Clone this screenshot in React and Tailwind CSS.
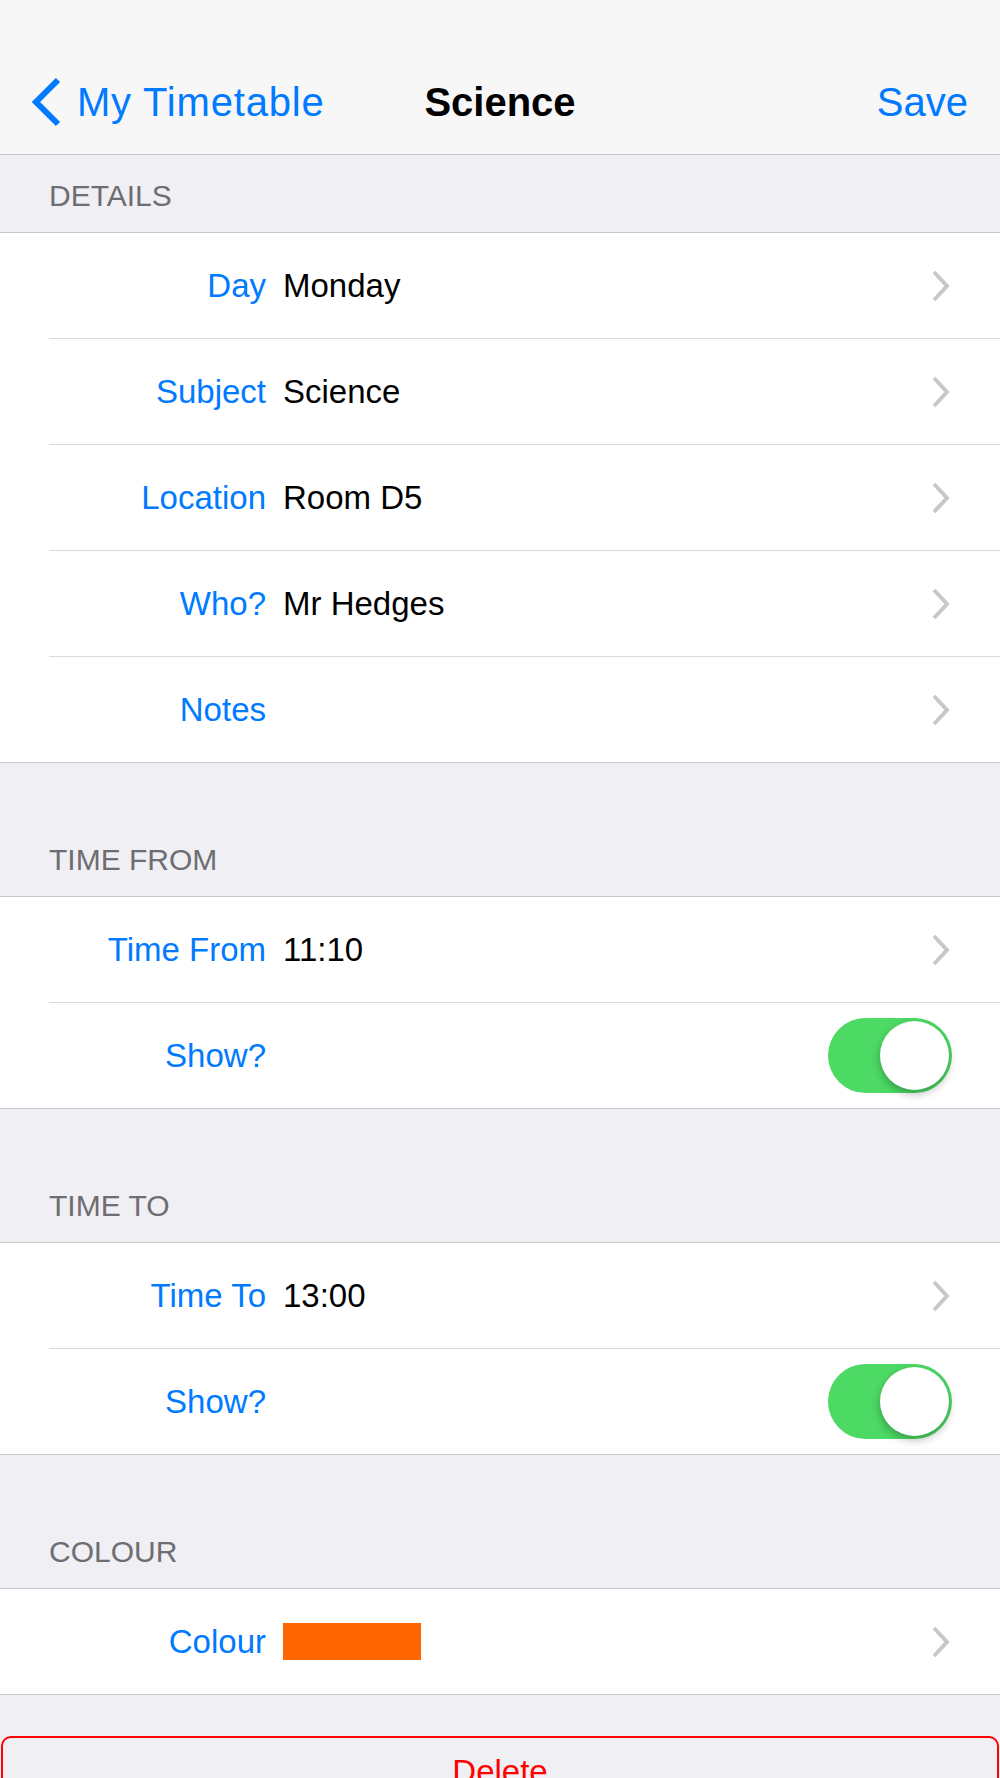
import React from 'react';

const font = { fontFamily: '"Liberation Sans", Arial, sans-serif' };

const Chevron = () => (
    <svg width="20" height="32" viewBox="0 0 20 32" className="shrink-0">
        <polyline points="3,2 16,16 3,30" fill="none" stroke="#c7c7cc" strokeWidth="4" />
    </svg>
);

const Toggle = () => (
    <div className="relative w-[124px] h-[75px] rounded-full bg-[#4cd964] shrink-0">
        <div className="absolute right-[3px] top-[3px] w-[69px] h-[69px] rounded-full bg-white shadow-[0_4px_9px_rgba(0,0,0,0.28)]" />
    </div>
);

const Header = ({ title, tall }) => (
    <div className={`${tall ? 'h-[133px]' : 'h-[77px]'} flex items-end pl-[49px] pb-[18px]`}>
        <span className="text-[30px] leading-[36px] text-[#6d6d72] uppercase">{title}</span>
    </div>
);

const Row = ({ label, value, swatch, toggle, last }) => (
    <div className={`ml-[49px] flex items-center ${last ? 'h-[105px]' : 'h-[106px] border-b border-[#d9d9dd]'}`}>
        <div className="w-[217px] text-right text-[33px] leading-[40px] text-[#007aff]">{label}</div>
        <div className="flex-1 ml-[17px] text-[33px] leading-[40px] text-black">
            {swatch ? <div className="w-[138px] h-[37px] bg-[#ff6600]" /> : value}
        </div>
        <div className={toggle ? 'pr-[48px]' : 'pr-[49px]'}>
            {toggle ? <Toggle /> : <Chevron />}
        </div>
    </div>
);

const Group = ({ children }) => (
    <div className="bg-white border-y border-[#c8c7cc]">{children}</div>
);

export default function App() {
    return (
        <div style={font} className="w-[1000px] h-[1778px] overflow-hidden bg-[#efeff4]">
            {/* navigation bar */}
            <div className="h-[155px] bg-[#f7f7f7] border-b border-[#c4c4c8] pt-[72px]">
                <div className="h-[60px] grid grid-cols-3 items-center">
                    <div className="flex items-center pl-[31px] gap-[16px] text-[40px] text-[#007aff] whitespace-nowrap">
                        <svg width="30" height="50" viewBox="0 0 30 50" className="shrink-0">
                            <polyline points="27,3 5,25 27,47" fill="none" stroke="#007aff" strokeWidth="6" />
                        </svg>
                        <span className="tracking-[0.8px]">My Timetable</span>
                    </div>
                    <div className="text-center text-[40px] font-bold text-black">Science</div>
                    <div className="text-right pr-[32px] text-[40px] text-[#007aff]">Save</div>
                </div>
            </div>

            <Header title="Details" />
            <Group>
                <Row label="Day" value="Monday" />
                <Row label="Subject" value="Science" />
                <Row label="Location" value="Room D5" />
                <Row label="Who?" value="Mr Hedges" />
                <Row label="Notes" value="" last />
            </Group>

            <Header title="Time From" tall />
            <Group>
                <Row label="Time From" value="11:10" />
                <Row label="Show?" toggle last />
            </Group>

            <Header title="Time To" tall />
            <Group>
                <Row label="Time To" value="13:00" />
                <Row label="Show?" toggle last />
            </Group>

            <Header title="Colour" tall />
            <Group>
                <Row label="Colour" swatch last />
            </Group>

            <div className="pt-[41px] px-[1px]">
                <button className="w-full h-[72px] flex items-center justify-center border-2 border-[#ff0000] rounded-[10px] text-[33px] text-[#ff0000]">
                    Delete
                </button>
            </div>
        </div>
    );
}
